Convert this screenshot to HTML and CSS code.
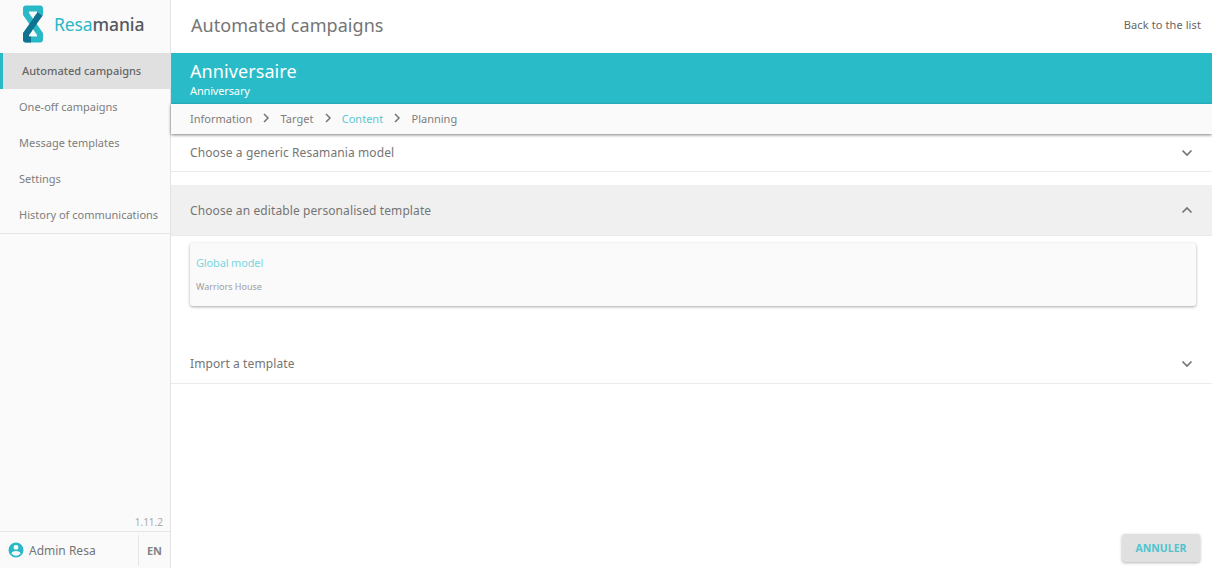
FILE: index.html
```html
<!DOCTYPE html>
<html lang="en">
<head>
<meta charset="utf-8">
<title>Automated campaigns</title>
<link rel="stylesheet" href="styles.css">
</head>
<body>
<div class="app">
  <aside class="sidebar">
    <div class="brand">
      <svg class="logo" viewBox="0 0 22 38" width="22" height="38" aria-hidden="true">
        <path d="M14 14L18 9V3.500H4V9L18 29V34.500H4V29L8 24" fill="none" stroke="#29b9c6" stroke-width="6" stroke-linejoin="round"/>
        <path d="M18 9L4 29V34.500H9" fill="none" stroke="#0f7291" stroke-width="6" stroke-linejoin="round"/>
      </svg>
      <span class="brand-name"><span class="brand-a">Resa</span>mania</span>
    </div>
    <nav class="nav">
      <a class="nav-item active">Automated campaigns</a>
      <a class="nav-item">One-off campaigns</a>
      <a class="nav-item">Message templates</a>
      <a class="nav-item">Settings</a>
      <a class="nav-item">History of communications</a>
    </nav>
    <div class="version">1.11.2</div>
    <div class="user">
      <div class="user-name">
        <svg viewBox="0 0 24 24" width="18" height="18" aria-hidden="true"><path fill="#29b9c6" d="M12 2a10 10 0 1 0 0 20 10 10 0 0 0 0-20zm0 3.200a3.300 3.300 0 1 1 0 6.600 3.300 3.300 0 0 1 0-6.600zm0 14.300a7.600 7.600 0 0 1-6-3c.1-2 4-3.100 6-3.100s5.900 1.100 6 3.100a7.600 7.600 0 0 1-6 3z"/></svg>
        <span>Admin Resa</span>
      </div>
      <div class="lang">EN</div>
    </div>
  </aside>
  <main class="main">
    <header class="topbar">
      <h1>Automated campaigns</h1>
      <a class="back">Back to the list</a>
    </header>
    <section class="banner">
      <div class="banner-title">Anniversaire</div>
      <div class="banner-sub">Anniversary</div>
    </section>
    <div class="crumbs">
      <span>Information</span>
      <svg class="sep" viewBox="0 0 8 10" width="8" height="10"><path d="M2 1l4 4-4 4" fill="none" stroke="#757575" stroke-width="1.500"/></svg>
      <span>Target</span>
      <svg class="sep" viewBox="0 0 8 10" width="8" height="10"><path d="M2 1l4 4-4 4" fill="none" stroke="#757575" stroke-width="1.500"/></svg>
      <span class="current">Content</span>
      <svg class="sep" viewBox="0 0 8 10" width="8" height="10"><path d="M2 1l4 4-4 4" fill="none" stroke="#757575" stroke-width="1.500"/></svg>
      <span>Planning</span>
    </div>
    <div class="acc first">
      <span>Choose a generic Resamania model</span>
      <svg viewBox="0 0 12 8" width="12" height="8"><path d="M1.500 1.500L6 6l4.500-4.500" fill="none" stroke="#757575" stroke-width="1.700"/></svg>
    </div>
    <div class="acc open">
      <span>Choose an editable personalised template</span>
      <svg viewBox="0 0 12 8" width="12" height="8"><path d="M1.500 6.500L6 2l4.500 4.500" fill="none" stroke="#757575" stroke-width="1.700"/></svg>
    </div>
    <div class="card">
      <div class="card-title">Global model</div>
      <div class="card-sub">Warriors House</div>
    </div>
    <div class="acc last">
      <span>Import a template</span>
      <svg viewBox="0 0 12 8" width="12" height="8"><path d="M1.500 1.500L6 6l4.500-4.500" fill="none" stroke="#757575" stroke-width="1.700"/></svg>
    </div>
    <div class="actions"><button class="cancel">ANNULER</button></div>
  </main>
</div>
</body>
</html>
```
FILE: styles.css
```css
* { box-sizing: border-box; }
html, body { margin: 0; height: 100%; }
body { font-family: "Noto Sans", "Open Sans", sans-serif; color: #757575; background: #fff; overflow: hidden; }
.app { display: flex; width: 1212px; height: 568px; }

.sidebar { width: 171px; flex: none; display: flex; flex-direction: column; background: #fafafa; border-right: 1px solid #e2e2e2; }
.brand { height: 53px; display: flex; align-items: center; padding: 4px 0 0 22px; gap: 10px; }
.logo { flex: none; margin-top: -9px; }
.brand-name { font-size: 17.500px; font-weight: 500; color: #55585c; margin-top: -9px; letter-spacing: -.1px; }
.brand-a { color: #29b9c6; font-weight: 400; }
.nav { display: flex; flex-direction: column; border-bottom: 1px solid #e6e6e6; padding-bottom: 0; height: 181px; }
.nav-item { height: 36px; line-height: 36px; padding-left: 19px; font-size: 11px; color: #7d7d7d; white-space: nowrap; }
.nav-item.active { background: #e0e0e0; border-left: 3px solid #29b9c6; color: #666; font-weight: 500; }
.version { margin-top: auto; height: 21px; padding-right: 7px; text-align: right; font-size: 10px; line-height: 24px; color: #aaa; }
.user { height: 37px; display: flex; align-items: center; border-top: 1px solid #e6e6e6; }
.user-name { flex: 1; display: flex; align-items: center; gap: 4px; padding-left: 7px; font-size: 12px; color: #757575; }
.lang { width: 32px; height: 31px; line-height: 31px; border-left: 1px solid #e6e6e6; text-align: center; font-size: 11px; font-weight: 700; color: #858585; }

.main { flex: 1; min-width: 0; display: flex; flex-direction: column; }
.topbar { height: 53px; flex: none; display: flex; align-items: center; justify-content: space-between; padding: 0 11px 4px 20px; }
.topbar h1 { margin: 0; font-size: 18px; font-weight: 400; color: #757575; letter-spacing: .05px; }
.back { font-size: 11px; color: #666; letter-spacing: .1px; }
.banner { height: 51px; flex: none; background: #29bbc7; color: #fff; padding: 6px 19px 0; }
.banner-title { font-size: 18px; line-height: 24px; letter-spacing: .08px; }
.banner-sub { font-size: 11px; line-height: 16px; margin-top: 0; letter-spacing: -.15px; }
.crumbs { height: 30px; flex: none; display: flex; align-items: center; gap: 10.200px; padding: 0 19px 2px; background: #fafafa; font-size: 11px; color: #7d7d7d; box-shadow: 0 1px 3px rgba(0,0,0,.5); position: relative; }
.current { color: #5bc8d2; }
.sep { flex: none; }
.acc { display: flex; align-items: center; justify-content: space-between; padding: 0 19px; font-size: 12px; color: #757575; border-bottom: 1px solid #ebebeb; letter-spacing: .1px; }
.acc.first { height: 38px; margin-bottom: 13px; }
.acc.open { height: 51px; background: #f0f0f0; margin-bottom: 7px; }
.acc.last { height: 40px; margin-top: 38px; }
.card { height: 63px; margin: 0 16px 0 19px; padding: 12px 6px 0; background: #fafafa; border-radius: 3px; box-shadow: 0 1px 3px rgba(0,0,0,.35); }
.card-title { font-size: 11px; line-height: 15px; color: #7ad6de; letter-spacing: -.15px; }
.card-sub { font-size: 9px; line-height: 13px; color: #a0a0a0; margin-top: 10px; }
.actions { margin-top: auto; display: flex; justify-content: flex-end; padding: 0 12px 6px 0; }
.cancel { width: 78px; height: 28px; padding: 0; border: 0; border-radius: 3px; background: #e0e0e0; box-shadow: 0 1px 3px rgba(0,0,0,.3); color: #4fc4cf; font: 700 10.500px "Open Sans", sans-serif; }
```
